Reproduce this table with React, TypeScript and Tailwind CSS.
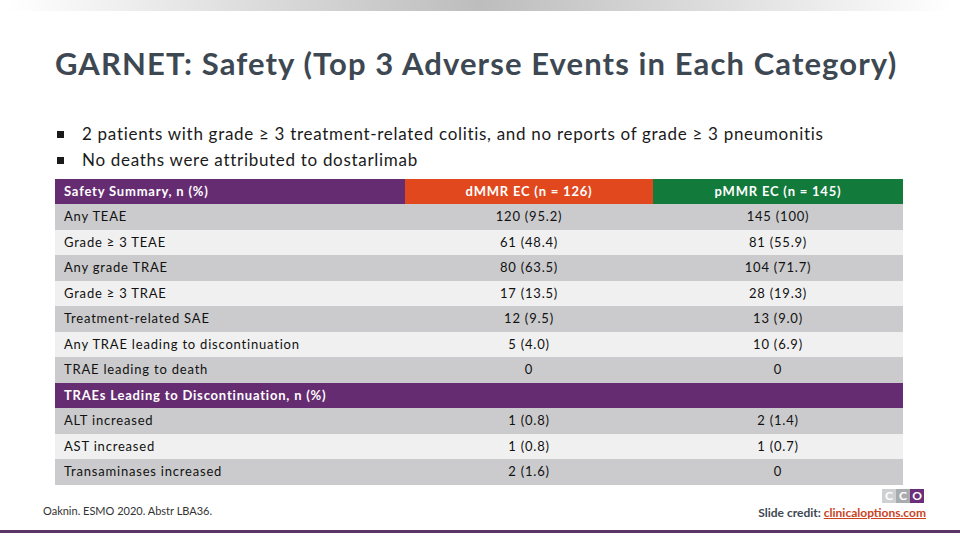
const rows: { label: string; d: string; p: string; bg: "g" | "l" | "h" }[] = [
  { label: "Any TEAE", d: "120 (95.2)", p: "145 (100)", bg: "g" },
  { label: "Grade ≥ 3 TEAE", d: "61 (48.4)", p: "81 (55.9)", bg: "l" },
  { label: "Any grade TRAE", d: "80 (63.5)", p: "104 (71.7)", bg: "g" },
  { label: "Grade ≥ 3 TRAE", d: "17 (13.5)", p: "28 (19.3)", bg: "l" },
  { label: "Treatment-related SAE", d: "12 (9.5)", p: "13 (9.0)", bg: "g" },
  { label: "Any TRAE leading to discontinuation", d: "5 (4.0)", p: "10 (6.9)", bg: "l" },
  { label: "TRAE leading to death", d: "0", p: "0", bg: "g" },
  { label: "TRAEs Leading to Discontinuation, n (%)", d: "", p: "", bg: "h" },
  { label: "ALT increased", d: "1 (0.8)", p: "2 (1.4)", bg: "g" },
  { label: "AST increased", d: "1 (0.8)", p: "1 (0.7)", bg: "l" },
  { label: "Transaminases increased", d: "2 (1.6)", p: "0", bg: "g" },
];

export default function App() {
  return (
    <div
      className="w-[960px] h-[540px] bg-white flex flex-col overflow-hidden"
      style={{ fontFamily: "Lato, 'Open Sans', sans-serif" }}
    >
      {/* top shade */}
      <div className="h-[11px] mx-[8px] bg-gradient-to-r from-white via-[#bdbdbd] to-white" />

      <h1 className="mt-[33px] ml-[55px] text-[31px] leading-[38px] font-bold text-[#3d4852] tracking-[1.1px]">
        GARNET: Safety (Top 3 Adverse Events in Each Category)
      </h1>

      <ul className="mt-[39px] ml-[57px] text-[17px] leading-[26px] text-[#1a1a1a] tracking-[0.7px]">
        <li className="flex items-center">
          <span className="w-[7px] h-[7px] bg-[#1a1a1a] mr-[18px]" />
          2 patients with grade ≥ 3 treatment-related colitis, and no reports of grade ≥ 3 pneumonitis
        </li>
        <li className="flex items-center">
          <span className="w-[7px] h-[7px] bg-[#1a1a1a] mr-[18px]" />
          No deaths were attributed to dostarlimab
        </li>
      </ul>

      <div className="mt-[6px] ml-[55px] w-[848px] text-[13px] text-[#111] tracking-[0.8px]">
        <div className="grid grid-cols-[350px_248px_250px] h-[25px] text-white font-bold">
          <div className="bg-[#662c71] pl-[9px] flex items-center">Safety Summary, n (%)</div>
          <div className="bg-[#e1481e] flex items-center justify-center">dMMR EC (n = 126)</div>
          <div className="bg-[#127a3b] flex items-center justify-center">pMMR EC (n = 145)</div>
        </div>
        {rows.map((r) => (
          <div
            key={r.label}
            className={
              "grid grid-cols-[350px_248px_250px] h-[25.5px] " +
              (r.bg === "g"
                ? "bg-[#cbcbcd]"
                : r.bg === "l"
                  ? "bg-[#f0f0f0]"
                  : "bg-[#662c71] text-white font-bold")
            }
          >
            <div className="pl-[9px] flex items-center whitespace-nowrap">{r.label}</div>
            <div className="flex items-center justify-center">{r.d}</div>
            <div className="flex items-center justify-center">{r.p}</div>
          </div>
        ))}
      </div>

      <div className="flex items-end justify-between mt-[4px] ml-[43px] mr-[34px]">
        <div className="text-[11px] text-[#333] mb-[1px]">Oaknin. ESMO 2020. Abstr LBA36.</div>
        <div className="flex flex-col items-end">
          <div className="flex h-[14px] mr-[2px]">
            <div className="w-[14px] bg-[#cfd0d2] text-white text-[12px] font-bold leading-[14px] text-center">C</div>
            <div className="w-[14px] bg-[#a9abae] text-white text-[12px] font-bold leading-[14px] text-center">C</div>
            <div className="w-[14px] bg-[#6b2f7a] text-white text-[12px] font-bold leading-[14px] text-center">O</div>
          </div>
          <div className="text-[12px] font-bold text-[#3d4852] mt-[2px] leading-[16px]">
            Slide credit:{" "}
            <span className="text-[#c9441e] underline">clinicaloptions.com</span>
          </div>
        </div>
      </div>

      <div className="mt-auto mb-[7px] h-[3px] bg-[#5b3566]" />
    </div>
  );
}
